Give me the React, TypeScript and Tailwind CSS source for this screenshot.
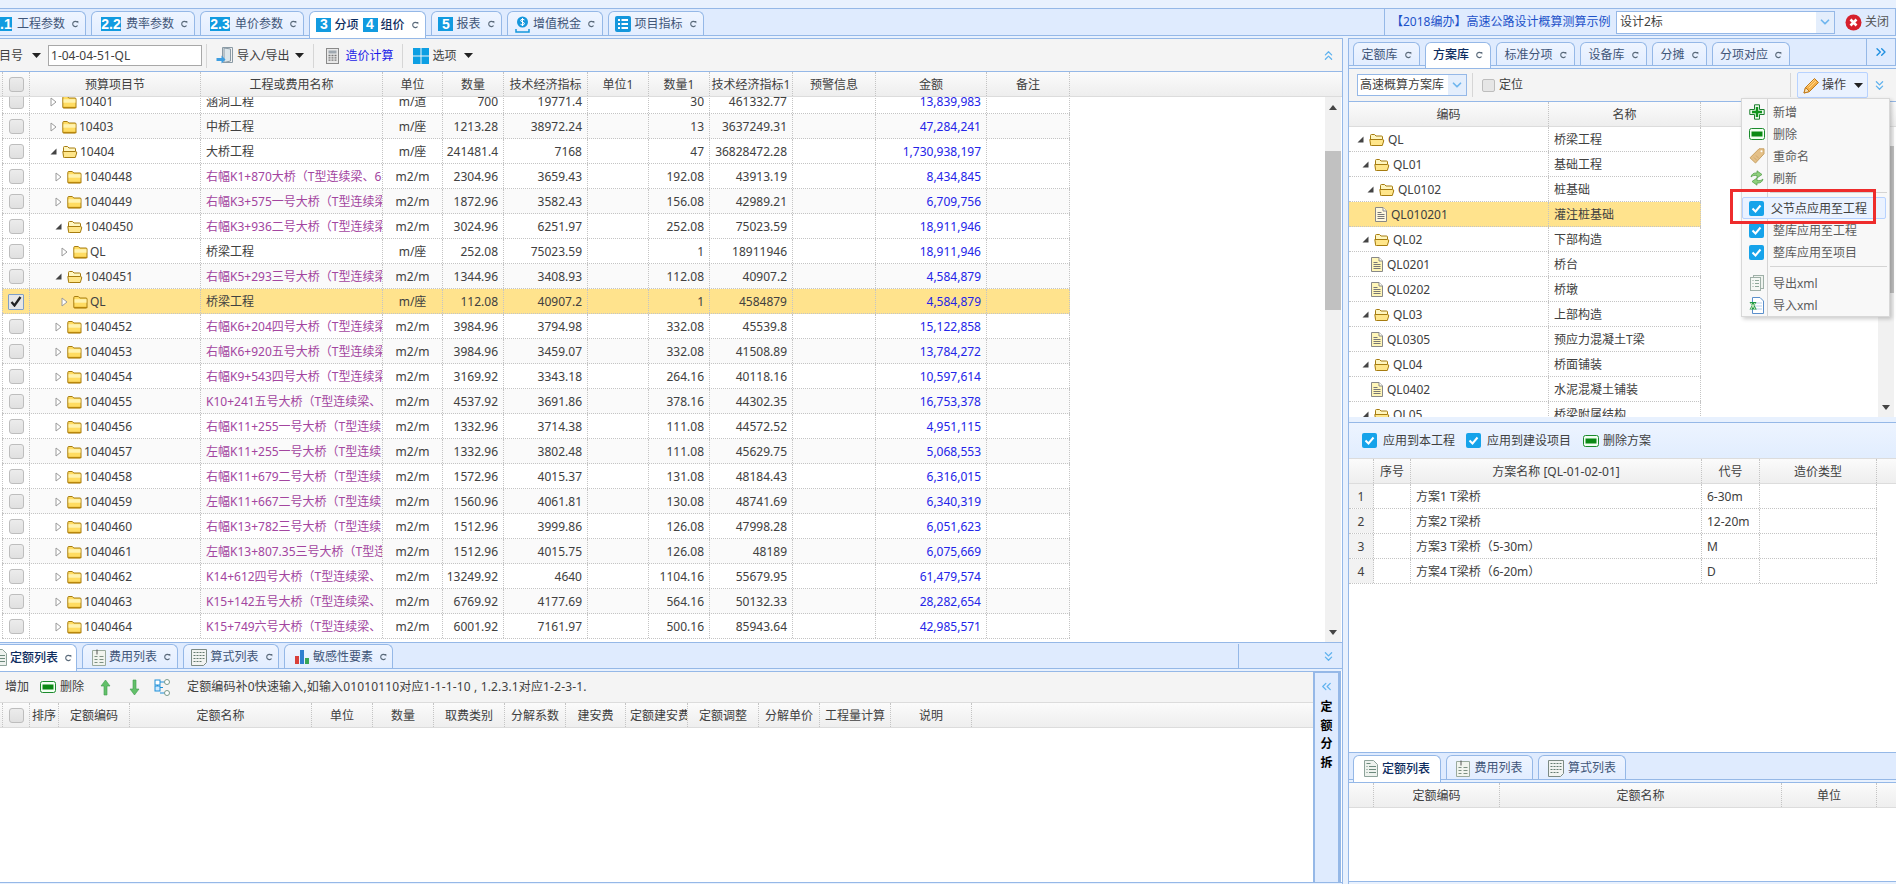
import React from "react";
import { ChevronsUp, ChevronsDown, ChevronsLeft, ChevronsRight, ChevronDown } from "lucide-react";

const Refresh = () => (
  <svg width="7" height="8" viewBox="0 0 8 9" className="shrink-0">
    <path d="M6.300 6.200A3 3 0 1 1 6 2.400" fill="none" stroke="#5a6a7a" strokeWidth="1.300" />
    <path d="M4.600 1.200h2.600v2.600z" fill="#5a6a7a" />
  </svg>
);

const Folder = ({ open }: { open?: boolean }) =>
  open ? (
    <svg width="16" height="14" viewBox="0 0 16 14" className="shrink-0">
      <path d="M1.500 12.500V2.500q0-1 1-1h3l1.500 1.500h5.500q1 0 1 1V6" fill="#fff6c0" stroke="#a67c10" />
      <path d="M.8 6.500h12.400q2 0 1.500 1.500l-1.400 4.500H2.500q-.8 0-1-1z" fill="#ffe68a" stroke="#a67c10" />
    </svg>
  ) : (
    <svg width="15" height="14" viewBox="0 0 15 14" className="shrink-0">
      <path d="M.8 12V2.500q0-1 1-1h3.500l1.500 1.500h6.200q1 0 1 1v8q0 1-1 1H1.800q-1 0-1-1z" fill="#ffdc62" stroke="#a67c10" />
      <path d="M1.500 4.200h12v3.500h-12z" fill="#fff3b0" />
      <path d="M.8 12.500h13.500" stroke="#b8860b" strokeWidth="1.300" />
    </svg>
  );

const Doc = ({ fill = "#fff6b8" }: { fill?: string }) => (
  <svg width="12" height="15" viewBox="0 0 12 15" className="shrink-0">
    <path d="M.5.500h7.500l3.500 3.500v10.500H.5z" fill={fill} stroke="#888" />
    <path d="M8 .5v3.500h3.500" fill="#fff" stroke="#888" />
    <path d="M2.500 5.500h4M2.500 7.500h7M2.500 9.500h7M2.500 11.500h7" stroke="#777" />
  </svg>
);

const TriClosed = () => (
  <svg width="7" height="10" viewBox="0 0 7 10" className="shrink-0">
    <path d="M1 1l5 4-5 4z" fill="#fff" stroke="#9a9a9a" />
  </svg>
);
const TriOpen = () => (
  <svg width="7" height="7" viewBox="0 0 7 7" className="shrink-0">
    <path d="M6.500.500V6.500H.500z" fill="#444" />
  </svg>
);
const Caret = () => (
  <svg width="9" height="5" viewBox="0 0 9 5" className="shrink-0">
    <path d="M0 0h9L4.500 5z" fill="#222" />
  </svg>
);

const GrayBox = () => (
  <div className="h-[15px] w-[15px] shrink-0 rounded-[3px] border border-[#bdbdbd] bg-gradient-to-b from-[#ececec] to-[#e0e0e0]" />
);
const BlueBox = () => (
  <div className="flex h-[15px] w-[15px] shrink-0 items-center justify-center rounded-[2px] bg-[#16a3ea]">
    <svg width="11" height="9" viewBox="0 0 11 9">
      <path d="M1.500 4.500l3 3 5-6" fill="none" stroke="#fff" strokeWidth="2" />
    </svg>
  </div>
);
const CheckedGray = () => (
  <div className="flex h-[16px] w-[16px] shrink-0 items-center justify-center rounded-[1px] border border-[#7f9fc8] bg-[#e6e6e6]">
    <svg width="12" height="11" viewBox="0 0 12 11">
      <path d="M1.500 6l3 3.500 6-8.500" fill="none" stroke="#222" strokeWidth="2.300" />
    </svg>
  </div>
);

const DelIcon = () => (
  <svg width="16" height="12" viewBox="0 0 16 12" className="shrink-0">
    <rect x=".5" y=".5" width="15" height="11" rx="2" fill="#f2fff2" stroke="#1b8a2d" />
    <rect x="2.500" y="3.500" width="11" height="5" fill="#0b8a14" />
  </svg>
);
const AddIcon = () => (
  <svg width="16" height="16" viewBox="0 0 16 16" className="shrink-0">
    <path d="M5.500.8h5v4.700h4.700v5h-4.700v4.700h-5v-4.700H.8v-5h4.700z" fill="#eaf9ea" stroke="#1c7f2e" />
    <path d="M6.800 3h2.400v3.800H13v2.400H9.200V13H6.800V9.200H3V6.800h3.800z" fill="#12941e" />
  </svg>
);
const TagIcon = () => (
  <svg width="16" height="16" viewBox="0 0 16 16" className="shrink-0">
    <path d="M10 .8h5v5L6.500 15 1 9.800z" fill="#e4c088" stroke="#c8a265" />
    <circle cx="12.500" cy="3.300" r="1" fill="#fff" />
    <path d="M5 9.500l3 3M7 7.500l3 3" stroke="#cfa96f" />
  </svg>
);
const RefreshIcon = () => (
  <svg width="16" height="16" viewBox="0 0 16 16" className="shrink-0">
    <path d="M2 7c.5-3 3-4.500 6-4V.8l5 3.700-5 3.500V5.500C5.500 5.200 3.500 5.500 2 7z" fill="#8fd07c" stroke="#4f9a46" strokeWidth=".7" />
    <path d="M14 9c-.5 3-3 4.500-6 4v2.200L3 11.500 8 8v2.500c2.500.3 4.500 0 6-1.500z" fill="#8fd07c" stroke="#4f9a46" strokeWidth=".7" />
  </svg>
);
const ExportIcon = () => (
  <svg width="14" height="16" viewBox="0 0 14 16" className="shrink-0">
    <rect x="3.500" y=".5" width="10" height="13" fill="#eef3ee" stroke="#9fb0a8" />
    <rect x=".5" y="2.500" width="10" height="13" fill="#f5f8f5" stroke="#9fb0a8" />
    <path d="M2.500 5.500h1M5 5.500h4M2.500 8.500h1M5 8.500h4M2.500 11.500h1M5 11.500h4" stroke="#8ea89a" />
  </svg>
);
const ExcelIcon = () => (
  <svg width="15" height="17" viewBox="0 0 15 17" className="shrink-0">
    <path d="M3.500.5h7.500l3.500 3.500v12.500h-11z" fill="#fff" stroke="#5b8fcb" />
    <path d="M6 6h7M6 9h7M6 12h7" stroke="#b7cfe8" />
    <path d="M.5 5h7l-2 3.500 2.300 4H.5l2.300-4z" fill="#1f9a47" />
    <path d="M2 6l4 6M6 6l-4 6" stroke="#d8f0c8" />
  </svg>
);
const PencilIcon = () => (
  <svg width="17" height="17" viewBox="0 0 17 17" className="shrink-0">
    <path d="M1 16l1.500-5.500L11.500 1.500l4 4-9 9z" fill="#f4b04a" stroke="#c07a1a" />
    <path d="M1 16l1.500-5.500 4 4z" fill="#f8e2b8" stroke="#c07a1a" />
    <path d="M4.500 9.500l7-7M6 11l7-7" stroke="#ffd78a" />
  </svg>
);
const DoorIcon = () => (
  <svg width="17" height="18" viewBox="0 0 17 18" className="shrink-0">
    <path d="M6.500.5h10v15h-10z" fill="#f2f2f2" stroke="#8a9aa5" />
    <path d="M8 1l6.500 1v12L8 15.500z" fill="#dde6ea" stroke="#8a9aa5" />
    <path d="M.5 11h5V8.500l4 4-4 4V14h-5z" fill="#3f9ee0" />
  </svg>
);
const CalcIcon = () => (
  <svg width="13" height="16" viewBox="0 0 13 16" className="shrink-0">
    <rect x=".5" y=".5" width="12" height="15" fill="#e8e8e8" stroke="#8a8a8a" />
    <rect x="2.500" y="2.500" width="8" height="3" fill="#9fa8b0" />
    <path d="M2.500 7.500h2M5.500 7.500h2M8.500 7.500h2M2.500 9.800h2M5.500 9.800h2M8.500 9.800h2M2.500 12.200h2M5.500 12.200h2M8.500 12.200h2" stroke="#777" strokeWidth="1.300" />
  </svg>
);
const WinIcon = () => (
  <svg width="16" height="16" viewBox="0 0 16 16" className="shrink-0">
    <path d="M0 0h7.500v7.500H0zM8.500 0H16v7.500H8.500zM0 8.500h7.500V16H0zM8.500 8.500H16V16H8.500z" fill="#0d9fe3" />
  </svg>
);
const ListDoc = () => (
  <svg width="14" height="17" viewBox="0 0 14 17" className="shrink-0">
    <path d="M.5.500h9l4 4v12H.5z" fill="#eef2ee" stroke="#8ea39a" />
    <path d="M2.500 6.500h1M5 6.500h7M2.500 9.500h1M5 9.500h7M2.500 12.500h1M5 12.500h7M2.500 3.500h4" stroke="#6d8a7d" />
  </svg>
);
const ClipDoc = () => (
  <svg width="14" height="17" viewBox="0 0 14 17" className="shrink-0">
    <path d="M.5 1.500h13v15H.5z" fill="#f1f4ee" stroke="#9aaa9d" />
    <path d="M5 .5v5" stroke="#555" />
    <path d="M2.500 7.500h3M7.500 7.500h4M2.500 10.500h3M7.500 10.500h4M2.500 13.500h3M7.500 13.500h4" stroke="#7c9082" />
  </svg>
);
const FormDoc = () => (
  <svg width="16" height="17" viewBox="0 0 16 17" className="shrink-0">
    <path d="M.5.500h15v13l-3 3H.5z" fill="#f1f3f1" stroke="#7c8a84" />
    <path d="M2.500 3.500h11M2.500 6.500h11M2.500 9.500h11M2.500 12.500h9" stroke="#647a70" strokeDasharray="2 1" />
  </svg>
);
const ChartIcon = () => (
  <svg width="16" height="16" viewBox="0 0 16 16" className="shrink-0">
    <rect x="1" y="7" width="4" height="8" fill="#d9403a" />
    <rect x="6" y="1" width="4" height="14" fill="#2f7fd0" />
    <rect x="11" y="9" width="4" height="6" fill="#3aa655" />
  </svg>
);
const TaxIcon = () => (
  <svg width="15" height="17" viewBox="0 0 15 17" className="shrink-0">
    <circle cx="7.500" cy="6" r="5.500" fill="#1597dc" />
    <path d="M9.500 4q-2-1.500-3.500-.3t1.500 2.300q3 1 1.500 2.500t-3.500-.2M7.500 2v8" fill="none" stroke="#fff" strokeWidth="1" />
    <path d="M1 13v3h13v-3" fill="none" stroke="#1597dc" strokeWidth="1.500" />
  </svg>
);
const IndexIcon = () => (
  <svg width="16" height="16" viewBox="0 0 16 16" className="shrink-0">
    <rect width="16" height="16" rx="2" fill="#1597dc" />
    <path d="M3 4h2M6.500 4H13M3 8h2M6.500 8H13M3 12h2M6.500 12H13" stroke="#fff" strokeWidth="1.800" />
  </svg>
);
const CloseIcon = () => (
  <svg width="17" height="17" viewBox="0 0 17 17" className="shrink-0">
    <circle cx="8.500" cy="8.500" r="8" fill="#d6202c" />
    <path d="M5.500 5.500l6 6M11.500 5.500l-6 6" stroke="#fff" strokeWidth="2.600" />
  </svg>
);
const UpArrow = ({ down }: { down?: boolean }) => (
  <svg width="11" height="17" viewBox="0 0 11 17" className={down ? "shrink-0 rotate-180" : "shrink-0"}>
    <path d="M5.500 1L10 7H7v9H4V7H1z" fill="#63c06a" stroke="#3d9a4c" strokeWidth=".6" />
  </svg>
);
const NodeIcon = () => (
  <svg width="17" height="17" viewBox="0 0 17 17" className="shrink-0">
    <path d="M3.500 5.500v6M6 3h5M6 14h5M6 8.500h3" stroke="#1e8fd8" fill="none" />
    <rect x="1" y="1" width="5" height="5" fill="#fff" stroke="#1e8fd8" />
    <rect x="1" y="7" width="5" height="5" fill="#cfeaff" stroke="#1e8fd8" />
    <circle cx="13" cy="3" r="2.500" fill="#fff" stroke="#7a9a8a" />
    <circle cx="13" cy="14" r="2.500" fill="#fff" stroke="#7a9a8a" />
  </svg>
);

const Badge = ({ t, wide }: { t: string; wide?: boolean }) => (
  <span
    className={
      (wide ? "w-[20px] mr-[2px] " : "w-[15px] ") +
      "flex h-[14px] shrink-0 items-center justify-center bg-[#129be0] font-['Liberation_Sans',sans-serif] text-[14px] font-bold text-white"
    }
  >
    {t}
  </span>
);

const Tab = ({
  w,
  active,
  tall,
  short,
  plain,
  children,
}: {
  w: string;
  active?: boolean;
  tall?: string;
  short?: string;
  plain?: boolean;
  children: React.ReactNode;
}) => (
  <div
    className={
      w +
      " relative z-10 flex shrink-0 items-center justify-center gap-[3px] rounded-t-[6px] border border-[#95b8e7] " +
      (active
        ? (tall ?? "h-[27px]") + " border-b-0 bg-white pb-px font-medium text-[#0e2d5f]"
        : (short ?? "h-[24px]") + " border-b-0 bg-gradient-to-b from-[#eff5ff] to-[#e2edff] pt-px text-[#3f5578]")
    }
  >
    {children}
    {!plain && <span className="ml-[4px]"><Refresh /></span>}
  </div>
);

const Sep = () => <div className="h-[24px] w-px shrink-0 bg-[#d6d6d6]" />;

const hCell = "flex items-center justify-center overflow-hidden whitespace-nowrap border-r border-dotted border-[#c4c4c4] pt-px text-[#404040]";
const headBg = "bg-gradient-to-b from-[#fbfbfb] to-[#eeeeee] border-b border-[#dcdcdc]";

const mainCols = "grid grid-cols-[28px_171px_182px_60px_61px_84px_61px_61px_83px_83px_111px_83px]";
const subCols = "grid grid-cols-[28px_29px_71px_182px_61px_61px_71px_61px_60px_62px_71px_61px_71px_81px]";
const treeCols = "grid grid-cols-[200px_152px]";
const planCols = "grid grid-cols-[25px_37px_291px_58px_117px]";
const quotaCols = "grid grid-cols-[25px_126px_282px_95px]";

type Row = { code: string; name: string; unit: string; q: string; i: string; q1: string; i1: string; a: string; lv: 0 | 1 | 2; open?: boolean; plain?: boolean };

const rows: Row[] = [
  { code: "10401", name: "涵洞工程", unit: "m/道", q: "700", i: "19771.4", q1: "30", i1: "461332.77", a: "13,839,983", lv: 0, plain: true },
  { code: "10403", name: "中桥工程", unit: "m/座", q: "1213.28", i: "38972.24", q1: "13", i1: "3637249.31", a: "47,284,241", lv: 0, plain: true },
  { code: "10404", name: "大桥工程", unit: "m/座", q: "241481.4", i: "7168", q1: "47", i1: "36828472.28", a: "1,730,938,197", lv: 0, open: true, plain: true },
  { code: "1040448", name: "右幅K1+870大桥（T型连续梁、6", unit: "m2/m", q: "2304.96", i: "3659.43", q1: "192.08", i1: "43913.19", a: "8,434,845", lv: 1 },
  { code: "1040449", name: "右幅K3+575一号大桥（T型连续梁", unit: "m2/m", q: "1872.96", i: "3582.43", q1: "156.08", i1: "42989.21", a: "6,709,756", lv: 1 },
  { code: "1040450", name: "右幅K3+936二号大桥（T型连续梁", unit: "m2/m", q: "3024.96", i: "6251.97", q1: "252.08", i1: "75023.59", a: "18,911,946", lv: 1, open: true },
  { code: "QL", name: "桥梁工程", unit: "m/座", q: "252.08", i: "75023.59", q1: "1", i1: "18911946", a: "18,911,946", lv: 2, plain: true },
  { code: "1040451", name: "右幅K5+293三号大桥（T型连续梁", unit: "m2/m", q: "1344.96", i: "3408.93", q1: "112.08", i1: "40907.2", a: "4,584,879", lv: 1, open: true },
  { code: "QL", name: "桥梁工程", unit: "m/座", q: "112.08", i: "40907.2", q1: "1", i1: "4584879", a: "4,584,879", lv: 2, plain: true },
  { code: "1040452", name: "右幅K6+204四号大桥（T型连续梁", unit: "m2/m", q: "3984.96", i: "3794.98", q1: "332.08", i1: "45539.8", a: "15,122,858", lv: 1 },
  { code: "1040453", name: "右幅K6+920五号大桥（T型连续梁", unit: "m2/m", q: "3984.96", i: "3459.07", q1: "332.08", i1: "41508.89", a: "13,784,272", lv: 1 },
  { code: "1040454", name: "右幅K9+543四号大桥（T型连续梁", unit: "m2/m", q: "3169.92", i: "3343.18", q1: "264.16", i1: "40118.16", a: "10,597,614", lv: 1 },
  { code: "1040455", name: "K10+241五号大桥（T型连续梁、", unit: "m2/m", q: "4537.92", i: "3691.86", q1: "378.16", i1: "44302.35", a: "16,753,378", lv: 1 },
  { code: "1040456", name: "右幅K11+255一号大桥（T型连续", unit: "m2/m", q: "1332.96", i: "3714.38", q1: "111.08", i1: "44572.52", a: "4,951,115", lv: 1 },
  { code: "1040457", name: "左幅K11+255一号大桥（T型连续", unit: "m2/m", q: "1332.96", i: "3802.48", q1: "111.08", i1: "45629.75", a: "5,068,553", lv: 1 },
  { code: "1040458", name: "右幅K11+679二号大桥（T型连续", unit: "m2/m", q: "1572.96", i: "4015.37", q1: "131.08", i1: "48184.43", a: "6,316,015", lv: 1 },
  { code: "1040459", name: "左幅K11+667二号大桥（T型连续", unit: "m2/m", q: "1560.96", i: "4061.81", q1: "130.08", i1: "48741.69", a: "6,340,319", lv: 1 },
  { code: "1040460", name: "右幅K13+782三号大桥（T型连续", unit: "m2/m", q: "1512.96", i: "3999.86", q1: "126.08", i1: "47998.28", a: "6,051,623", lv: 1 },
  { code: "1040461", name: "左幅K13+807.35三号大桥（T型连", unit: "m2/m", q: "1512.96", i: "4015.75", q1: "126.08", i1: "48189", a: "6,075,669", lv: 1 },
  { code: "1040462", name: "K14+612四号大桥（T型连续梁、", unit: "m2/m", q: "13249.92", i: "4640", q1: "1104.16", i1: "55679.95", a: "61,479,574", lv: 1 },
  { code: "1040463", name: "K15+142五号大桥（T型连续梁、", unit: "m2/m", q: "6769.92", i: "4177.69", q1: "564.16", i1: "50132.33", a: "28,282,654", lv: 1 },
  { code: "1040464", name: "K15+749六号大桥（T型连续梁、", unit: "m2/m", q: "6001.92", i: "7161.97", q1: "500.16", i1: "85943.64", a: "42,985,571", lv: 1 },
];
const altRows = [1, 4, 7, 10, 12, 14, 16, 18, 20];
const lvPad = ["pl-[20px]", "pl-[25px]", "pl-[31px]"];

const cell = "flex h-[24px] items-center overflow-hidden whitespace-nowrap border-r border-dotted border-[#c4c4c4] pt-px";
const num = cell + " justify-end pr-[5px]";

const MainRow = ({ r, idx }: { r: Row; idx: number }) => {
  const sel = idx === 8;
  const bg = sel ? "bg-[#ffe38d]" : altRows.includes(idx) ? "bg-[#fafafa]" : "bg-white";
  return (
    <div className={mainCols + " h-[25px] w-max border-b border-dotted border-[#c4c4c4] text-[#404040] " + bg}>
      <div className={cell + " justify-center border-l"}>{sel ? <CheckedGray /> : <GrayBox />}</div>
      <div className={cell + " " + lvPad[r.lv]}>
        <span className="flex w-[12px] shrink-0 items-center">{r.open ? <TriOpen /> : <TriClosed />}</span>
        <Folder open={r.open} />
        <span className="ml-[2px]">{r.code}</span>
      </div>
      <div className={cell + " pl-[5px] " + (r.plain ? "" : "text-[#a3459f]")}>{r.name}</div>
      <div className={cell + " justify-center"}>{r.unit}</div>
      <div className={num}>{r.q}</div>
      <div className={num}>{r.i}</div>
      <div className={cell} />
      <div className={num}>{r.q1}</div>
      <div className={num}>{r.i1}</div>
      <div className={cell} />
      <div className={num + " text-[#2323e8]"}>{r.a}</div>
      <div className={cell} />
    </div>
  );
};

const treeRows: { code: string; name: string; pad: string; kind: "open" | "doc" | "doc-sel"; }[] = [
  { code: "QL", name: "桥梁工程", pad: "pl-[8px]", kind: "open" },
  { code: "QL01", name: "基础工程", pad: "pl-[13px]", kind: "open" },
  { code: "QL0102", name: "桩基础", pad: "pl-[18px]", kind: "open" },
  { code: "QL010201", name: "灌注桩基础", pad: "pl-[26px]", kind: "doc-sel" },
  { code: "QL02", name: "下部构造", pad: "pl-[13px]", kind: "open" },
  { code: "QL0201", name: "桥台", pad: "pl-[22px]", kind: "doc" },
  { code: "QL0202", name: "桥墩", pad: "pl-[22px]", kind: "doc" },
  { code: "QL03", name: "上部构造", pad: "pl-[13px]", kind: "open" },
  { code: "QL0305", name: "预应力混凝土T梁", pad: "pl-[22px]", kind: "doc" },
  { code: "QL04", name: "桥面铺装", pad: "pl-[13px]", kind: "open" },
  { code: "QL0402", name: "水泥混凝土铺装", pad: "pl-[22px]", kind: "doc" },
  { code: "QL05", name: "桥梁附属结构", pad: "pl-[13px]", kind: "open" },
];

const plans = [
  ["1", "方案1 T梁桥", "6-30m"],
  ["2", "方案2 T梁桥", "12-20m"],
  ["3", "方案3 T梁桥（5-30m）", "M"],
  ["4", "方案4 T梁桥（6-20m）", "D"],
];

const MenuItem = ({ icon, label, hi }: { icon: React.ReactNode; label: string; hi?: boolean }) => (
  <div className="flex h-[22px] items-center">
    <span className="flex w-[26px] shrink-0 items-center justify-center pl-[3px]">{icon}</span>
    {hi ? (
      <span className="ml-[-26px] flex h-[22px] w-[144px] shrink-0 items-center rounded-[2px] border border-[#b7d2ff] bg-[#eaf2ff] pl-[28px] pt-px text-[#404040]">
        {label}
      </span>
    ) : (
      <span className="pl-[5px] pt-px text-[#5c5c5c]">{label}</span>
    )}
  </div>
);

export default function App() {
  return (
    <div className="relative h-[884px] w-[1896px] overflow-hidden bg-[#e8f1fe] font-['Noto_Sans','Noto_Sans_CJK_SC',sans-serif] text-[12px] text-[#404040]">
      <div className="h-[8px]" />
      {/* top tab bar */}
      <div className="flex h-[28px] border-y border-[#95b8e7] bg-[#dfebfe]">
        <div className="ml-[-18px] flex min-w-0 flex-1 gap-[5px] pt-[2px]">
          <Tab w="w-[104px] pl-[3px]"><Badge t="2.1" wide /><span>工程参数</span></Tab>
          <Tab w="w-[104px] pl-[3px]"><Badge t="2.2" wide /><span>费率参数</span></Tab>
          <Tab w="w-[104px] pl-[3px]"><Badge t="2.3" wide /><span>单价参数</span></Tab>
          <Tab w="w-[117px]" active><Badge t="3" /><span className="mr-[1px]">分项</span><Badge t="4" /><span>组价</span></Tab>
          <Tab w="w-[71px]"><Badge t="5" /><span>报表</span></Tab>
          <Tab w="w-[96px]"><TaxIcon /><span>增值税金</span></Tab>
          <Tab w="w-[96px]"><IndexIcon /><span>项目指标</span></Tab>
        </div>
        <div className="flex w-[512px] shrink-0 items-center border-l border-r border-[#95b8e7] pl-[6px]">
          <span className="w-[215px] shrink-0 whitespace-nowrap text-[#1d52c9]">【2018编办】高速公路设计概算测算示例</span>
          <div className="ml-[10px] flex h-[23px] w-[219px] shrink-0 items-center border border-[#95b8e7] bg-white">
            <span className="flex-1 pl-[3px]">设计2标</span>
            <span className="flex h-full w-[18px] items-center justify-center bg-[#e4eefc]">
              <ChevronDown size={14} strokeWidth={3} className="text-[#6fb6ee]" />
            </span>
          </div>
          <span className="ml-[10px]"><CloseIcon /></span>
          <span className="ml-[3px] text-[#555]">关闭</span>
        </div>
      </div>
      <div className="h-[2px]" />
      <div className="flex h-[846px]">
        {/* left panel */}
        <div className="flex w-[1343px] shrink-0 flex-col border-r border-[#95b8e7]">
          <div className="flex h-[34px] shrink-0 items-center border-y border-t-[#95b8e7] border-b-[#95b8e7] bg-[#f4f4f4] pt-px">
            <span className="ml-[-13px]">项目号</span>
            <span className="ml-[9px]"><Caret /></span>
            <div className="ml-[7px] flex h-[21px] w-[154px] shrink-0 items-center border border-[#a8a8a8] bg-white pl-[2px]">1-04-04-51-QL</div>
            <span className="ml-[4px]"><Sep /></span>
            <span className="ml-[9px]"><DoorIcon /></span>
            <span className="ml-[4px]">导入/导出</span>
            <span className="ml-[6px]"><Caret /></span>
            <span className="ml-[9px]"><Sep /></span>
            <span className="ml-[12px]"><CalcIcon /></span>
            <span className="ml-[6px] text-[#1a1ae8]">造价计算</span>
            <span className="ml-[8px]"><Sep /></span>
            <span className="ml-[10px]"><WinIcon /></span>
            <span className="ml-[4px]">选项</span>
            <span className="ml-[7px]"><Caret /></span>
            <span className="ml-auto mr-[6px] text-[#5fb2ee]"><ChevronsUp size={15} /></span>
          </div>
          {/* main table header */}
          <div className={"h-[25px] shrink-0 pl-[2px] " + headBg}>
            <div className={mainCols + " h-[24px] w-max"}>
              <div className={hCell + " border-l"}><GrayBox /></div>
              {["预算项目节", "工程或费用名称", "单位", "数量", "技术经济指标", "单位1", "数量1", "技术经济指标1", "预警信息", "金额", "备注"].map((h) => (
                <div key={h} className={hCell}>{h}</div>
              ))}
            </div>
          </div>
          {/* main table body */}
          <div className="flex h-[545px] shrink-0 overflow-hidden bg-white">
            <div className="min-w-0 flex-1 overflow-hidden pl-[2px]">
              <div className="mt-[-8px]">
                {rows.map((r, i) => (
                  <MainRow key={i} r={r} idx={i} />
                ))}
              </div>
            </div>
            <div className="mr-[1px] flex w-[16px] shrink-0 flex-col items-center bg-[#f1f1f1]">
              <div className="flex h-[54px] w-full shrink-0 items-start justify-center pt-[8px]">
                <svg width="8" height="5" viewBox="0 0 8 5"><path d="M4 0l4 5H0z" fill="#444" /></svg>
              </div>
              <div className="h-[159px] w-full shrink-0 bg-[#c1c1c1]" />
              <div className="flex flex-1 items-end pb-[7px]">
                <svg width="8" height="5" viewBox="0 0 8 5"><path d="M0 0h8L4 5z" fill="#444" /></svg>
              </div>
            </div>
          </div>
          {/* lower tabs */}
          <div className="flex h-[27px] shrink-0 border-y border-[#95b8e7] bg-[#dfebfe] pt-px">
            <div className="ml-[-20px] flex flex-1 gap-[5px]">
              <Tab w="w-[97px] pl-[8px]" active><ListDoc /><span>定额列表</span></Tab>
              <Tab w="w-[96px] pl-[3px]"><ClipDoc /><span>费用列表</span></Tab>
              <Tab w="w-[96px] pl-[2px]"><FormDoc /><span>算式列表</span></Tab>
              <Tab w="w-[109px] pl-[4px]"><ChartIcon /><span>敏感性要素</span></Tab>
            </div>
            <div className="flex w-[104px] shrink-0 items-center justify-end border-l border-[#95b8e7] pr-[6px] text-[#5fb2ee]">
              <ChevronsDown size={15} />
            </div>
          </div>
          <div className="h-[2px] shrink-0" />
          <div className="flex h-[212px] shrink-0 border-b border-[#95b8e7] bg-white">
            <div className="flex min-w-0 flex-1 flex-col">
              <div className="flex h-[32px] shrink-0 items-center border-y border-t-[#95b8e7] border-b-[#dcdcdc] bg-[#f4f4f4]">
                <span className="ml-[-16px]"><AddIcon /></span>
                <span className="ml-[5px]">增加</span>
                <span className="ml-[11px]"><DelIcon /></span>
                <span className="ml-[4px]">删除</span>
                <span className="ml-[16px]"><UpArrow /></span>
                <span className="ml-[18px]"><UpArrow down /></span>
                <span className="ml-[14px]"><NodeIcon /></span>
                <span className="ml-[16px] whitespace-nowrap tracking-[0.15px]">定额编码补0快速输入,如输入01010110对应1-1-1-10 , 1.2.3.1对应1-2-3-1.</span>
              </div>
              <div className={"h-[25px] shrink-0 pl-[2px] " + headBg}>
                <div className={subCols + " h-[24px] w-max"}>
                  <div className={hCell + " border-l"}><GrayBox /></div>
                  {["排序", "定额编码", "定额名称", "单位", "数量", "取费类别", "分解系数", "建安费", "定额建安费", "定额调整", "分解单价", "工程量计算", "说明"].map((h) => (
                    <div key={h} className={hCell + (h === "定额建安费" ? " justify-start pl-[4px]" : "")}>{h}</div>
                  ))}
                </div>
              </div>
            </div>
            <div className="mr-px flex w-[28px] shrink-0 flex-col items-center border-x-2 border-t-2 border-[#95b8e7] border-r-[3px] bg-[#dfebfe]">
              <ChevronsLeft size={15} className="mt-[6px] text-[#5fb2ee]" />
              <div className="mt-[4px] flex flex-col font-bold leading-[18.5px] text-black">
                <span>定</span>
                <span>额</span>
                <span>分</span>
                <span>拆</span>
              </div>
            </div>
          </div>
        </div>
        <div className="w-[5px] shrink-0" />
        {/* right panel */}
        <div className="flex min-w-0 flex-1 flex-col border-l border-[#95b8e7]">
          <div className="flex h-[28px] shrink-0 border-y border-r border-[#95b8e7] bg-[#dfebfe] pl-[4px] pt-[3px]">
            <div className="flex flex-1 gap-[5px]">
              <Tab w="w-[67px]" short="h-[23px]" tall="h-[26px]"><span>定额库</span></Tab>
              <Tab w="w-[66px]" active short="h-[23px]" tall="h-[26px]"><span>方案库</span></Tab>
              <Tab w="w-[79px]" short="h-[23px]" tall="h-[26px]"><span>标准分项</span></Tab>
              <Tab w="w-[67px]" short="h-[23px]" tall="h-[26px]"><span>设备库</span></Tab>
              <Tab w="w-[55px]" short="h-[23px]" tall="h-[26px]"><span>分摊</span></Tab>
              <Tab w="w-[78px]" short="h-[23px]" tall="h-[26px]"><span>分项对应</span></Tab>
            </div>
            <div className="mt-[-3px] flex w-[29px] shrink-0 items-center justify-center border-l border-[#95b8e7] text-[#1e8fe0]">
              <ChevronsRight size={16} />
            </div>
          </div>
          <div className="h-[2px] shrink-0" />
          <div className="flex h-[34px] shrink-0 items-center border-y border-[#95b8e7] bg-[#f4f4f4] pl-[8px]">
            <div className="flex h-[22px] w-[110px] shrink-0 items-center border border-[#95b8e7] bg-white pl-[2px]">
              <span className="flex-1 whitespace-nowrap">高速概算方案库</span>
              <span className="flex h-full w-[18px] items-center justify-center bg-[#e4eefc]">
                <ChevronDown size={14} strokeWidth={3} className="text-[#6fb6ee]" />
              </span>
            </div>
            <span className="ml-[5px]"><Sep /></span>
            <span className="ml-[9px] flex h-[13px] w-[13px] rounded-[2px] border border-[#bdbdbd] bg-[#e6e6e6]" />
            <span className="ml-[4px]">定位</span>
            <span className="ml-[267px]"><Sep /></span>
            <div className="ml-[6px] flex h-[26px] w-[71px] shrink-0 items-center rounded-[2px] border border-[#b7d2ff] bg-[#eaf2ff] pl-[5px]">
              <PencilIcon />
              <span className="ml-[2px]">操作</span>
              <span className="ml-[8px]"><Caret /></span>
            </div>
            <span className="ml-[4px] text-[#5fb2ee]"><ChevronsDown size={15} /></span>
          </div>
          <div className={"flex h-[25px] shrink-0 " + headBg}>
            <div className={treeCols + " h-[24px] w-max"}>
              <div className={hCell}>编码</div>
              <div className={hCell}>名称</div>
            </div>
          </div>
          <div className="flex h-[290px] shrink-0 overflow-hidden bg-white">
            <div className="min-w-0 flex-1">
              {treeRows.map((r) => (
                <div key={r.code} className={treeCols + " h-[25px] w-max border-b border-dotted border-[#c4c4c4] " + (r.kind === "doc-sel" ? "bg-[#ffe38d]" : "bg-white")}>
                  <div className={cell + " " + r.pad}>
                    {r.kind === "open" && (
                      <span className="mr-[5px] flex w-[7px] shrink-0 items-center"><TriOpen /></span>
                    )}
                    {r.kind === "open" ? <Folder open /> : <Doc fill={r.kind === "doc-sel" ? "#fff9de" : "#fff6b8"} />}
                    <span className={r.kind === "open" ? "ml-[3px]" : "ml-[4px]"}>{r.code}</span>
                  </div>
                  <div className={cell + " pl-[5px]"}>{r.name}</div>
                </div>
              ))}
            </div>
            <div className="mr-[2px] flex w-[16px] shrink-0 flex-col bg-[#f1f1f1]">
              <div className="h-[19px] shrink-0" />
              <div className="h-[147px] w-full shrink-0 bg-[#c1c1c1]" />
              <div className="flex flex-1 items-end justify-center pb-[7px]">
                <svg width="8" height="5" viewBox="0 0 8 5"><path d="M0 0h8L4 5z" fill="#444" /></svg>
              </div>
            </div>
          </div>
          <div className="h-[5px] shrink-0" />
          <div className="flex h-[37px] shrink-0 items-center border-y border-t-[#95b8e7] border-b-[#dcdcdc] bg-gradient-to-b from-[#edf4ff] to-[#e1edfe] pl-[13px]">
            <BlueBox />
            <span className="ml-[6px]">应用到本工程</span>
            <span className="ml-[11px]"><BlueBox /></span>
            <span className="ml-[6px]">应用到建设项目</span>
            <span className="ml-[12px]"><DelIcon /></span>
            <span className="ml-[4px]">删除方案</span>
          </div>
          <div className={"flex h-[25px] shrink-0 " + headBg}>
            <div className={planCols + " h-[24px] w-max"}>
              <div className={hCell} />
              <div className={hCell}>序号</div>
              <div className={hCell}>方案名称 [QL-01-02-01]</div>
              <div className={hCell}>代号</div>
              <div className={hCell}>造价类型</div>
            </div>
          </div>
          <div className="h-[268px] shrink-0 bg-white">
            {plans.map((p) => (
              <div key={p[0]} className={planCols + " h-[25px] w-max border-b border-dotted border-[#c4c4c4]"}>
                <div className={cell + " justify-center bg-[#f2f2f2]"}>{p[0]}</div>
                <div className={cell} />
                <div className={cell + " pl-[5px]"}>{p[1]}</div>
                <div className={cell + " pl-[5px]"}>{p[2]}</div>
                <div className={cell} />
              </div>
            ))}
          </div>
          <div className="flex h-[28px] shrink-0 gap-[5px] border-y border-[#95b8e7] bg-[#dfebfe] pl-[4px] pt-[2px]">
            <Tab w="w-[88px]" active plain><ListDoc /><span className="ml-[1px]">定额列表</span></Tab>
            <Tab w="w-[87px]" plain><ClipDoc /><span className="ml-[1px]">费用列表</span></Tab>
            <Tab w="w-[88px]" plain><FormDoc /><span className="ml-[1px]">算式列表</span></Tab>
          </div>
          <div className="h-[2px] shrink-0" />
          <div className={"flex h-[26px] shrink-0 border-t border-t-[#95b8e7] " + headBg}>
            <div className={quotaCols + " h-[24px] w-max"}>
              <div className={hCell} />
              <div className={hCell}>定额编码</div>
              <div className={hCell}>定额名称</div>
              <div className={hCell}>单位</div>
            </div>
          </div>
          <div className="h-[74px] shrink-0 border-b border-[#95b8e7] bg-white" />
        </div>
      </div>
      {/* dropdown menu */}
      <div className="absolute left-[1741px] top-[98px] z-20 flex w-[149px] flex-col border border-[#d8d8d8] bg-[#f8f8f8] pt-[2px] shadow-[2px_2px_4px_rgba(0,0,0,0.2)]">
        <div className="absolute bottom-0 left-[25px] top-0 w-px bg-[#d4d4d4]" />
        <MenuItem icon={<AddIcon />} label="新增" />
        <MenuItem icon={<DelIcon />} label="删除" />
        <MenuItem icon={<TagIcon />} label="重命名" />
        <MenuItem icon={<RefreshIcon />} label="刷新" />
        <div className="ml-[28px] mr-[2px] mb-[4px] mt-[3px] h-px bg-[#d4d4d4]" />
        <div className="relative z-10"><MenuItem icon={<span className="relative z-10"><BlueBox /></span>} label="父节点应用至工程" hi /></div>
        <MenuItem icon={<BlueBox />} label="整库应用至工程" />
        <MenuItem icon={<BlueBox />} label="整库应用至项目" />
        <div className="ml-[28px] mr-[2px] mb-[5px] mt-[3px] h-px bg-[#d4d4d4]" />
        <MenuItem icon={<ExportIcon />} label="导出xml" />
        <MenuItem icon={<ExcelIcon />} label="导入xml" />
      </div>
      {/* red annotation box */}
      <div className="absolute left-[1730px] top-[189px] z-30 h-[35px] w-[146px] border-[3px] border-[#ee2c2c]" />
    </div>
  );
}
